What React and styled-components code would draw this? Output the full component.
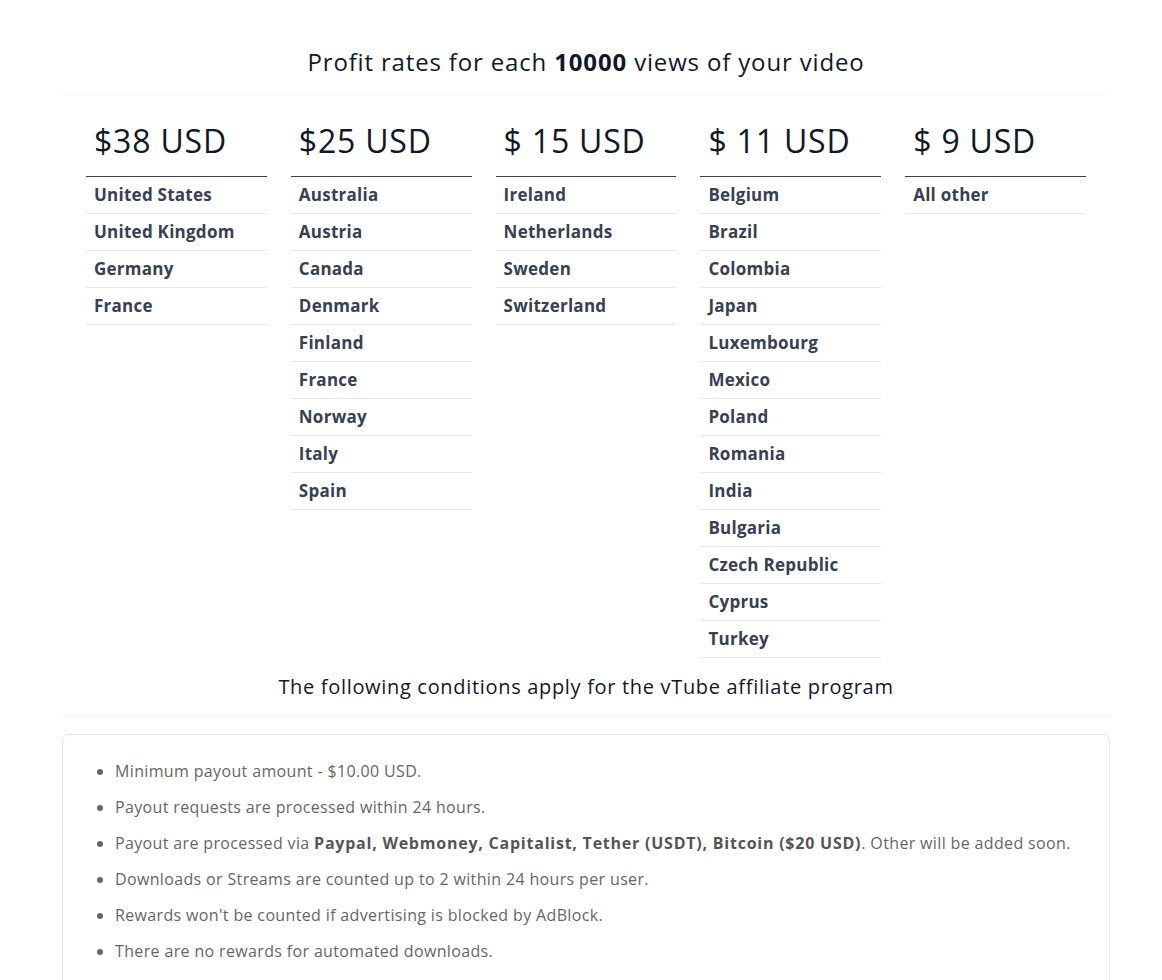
import React from 'react';
import styled, { createGlobalStyle } from 'styled-components';

const GlobalStyle = createGlobalStyle`
  body {
    margin: 0;
    background: #fff;
    font-family: "Open Sans", "Liberation Sans", sans-serif;
  }
`;

const Page = styled.div`
  width: 1048px;
  padding: 44px 52px 0 62px;
`;

const Title = styled.h2`
  margin: 0;
  padding-bottom: 14px;
  font-size: 24px;
  line-height: 36px;
  font-weight: 400;
  letter-spacing: 0.035em;
  text-align: center;
  color: #111827;
  border-bottom: 1px solid #f3f4f6;

  b {
    font-weight: 700;
  }
`;

const RatesGrid = styled.div`
  display: grid;
  grid-template-columns: repeat(5, 1fr);
  column-gap: 24px;
  padding: 0 24px;
  align-items: start;
`;

const PriceHead = styled.div`
  padding: 22px 8px 11px;
  font-size: 32px;
  line-height: 48px;
  letter-spacing: 0.025em;
  color: #111827;
  border-bottom: 1px solid #374151;
`;

const CountryRow = styled.div`
  padding: 0 8px;
  height: 36px;
  line-height: 36px;
  font-size: 17px;
  font-weight: 700;
  letter-spacing: 0.015em;
  color: #374151;
  border-bottom: 1px solid #e5e7eb;
`;

const SubTitle = styled.h3`
  margin: 14px 0 0;
  padding-bottom: 14px;
  font-size: 20px;
  line-height: 30px;
  font-weight: 400;
  letter-spacing: 0.034em;
  text-align: center;
  color: #111827;
  border-bottom: 1px solid #f3f4f6;
`;

const Card = styled.div`
  margin-top: 17px;
  border: 1px solid #e5e7eb;
  border-radius: 6px;
  padding: 18px 0 20px;
`;

const Conditions = styled.ul`
  margin: 0;
  padding-left: 52px;
`;

const Condition = styled.li`
  font-size: 16px;
  line-height: 36px;
  letter-spacing: 0.022em;
  color: #666;

  b {
    font-weight: 700;
    letter-spacing: 0.048em;
    color: #555;
  }
`;

const rates = [
  { price: '$38 USD', countries: ['United States', 'United Kingdom', 'Germany', 'France'] },
  {
    price: '$25 USD',
    countries: ['Australia', 'Austria', 'Canada', 'Denmark', 'Finland', 'France', 'Norway', 'Italy', 'Spain'],
  },
  { price: '$ 15 USD', countries: ['Ireland', 'Netherlands', 'Sweden', 'Switzerland'] },
  {
    price: '$ 11 USD',
    countries: [
      'Belgium', 'Brazil', 'Colombia', 'Japan', 'Luxembourg', 'Mexico', 'Poland',
      'Romania', 'India', 'Bulgaria', 'Czech Republic', 'Cyprus', 'Turkey',
    ],
  },
  { price: '$ 9 USD', countries: ['All other'] },
];

const App = () => (
  <>
    <GlobalStyle />
    <Page>
      <Title>
        Profit rates for each <b>10000</b> views of your video
      </Title>
      <RatesGrid>
        {rates.map((r) => (
          <div key={r.price}>
            <PriceHead>{r.price}</PriceHead>
            {r.countries.map((c) => (
              <CountryRow key={c}>{c}</CountryRow>
            ))}
          </div>
        ))}
      </RatesGrid>
      <SubTitle>The following conditions apply for the vTube affiliate program</SubTitle>
      <Card>
        <Conditions>
          <Condition>Minimum payout amount - $10.00 USD.</Condition>
          <Condition>Payout requests are processed within 24 hours.</Condition>
          <Condition>
            Payout are processed via <b>Paypal, Webmoney, Capitalist, Tether (USDT), Bitcoin ($20 USD)</b>. Other will be added soon.
          </Condition>
          <Condition>Downloads or Streams are counted up to 2 within 24 hours per user.</Condition>
          <Condition>Rewards won't be counted if advertising is blocked by AdBlock.</Condition>
          <Condition>There are no rewards for automated downloads.</Condition>
        </Conditions>
      </Card>
    </Page>
  </>
);

export default App;
